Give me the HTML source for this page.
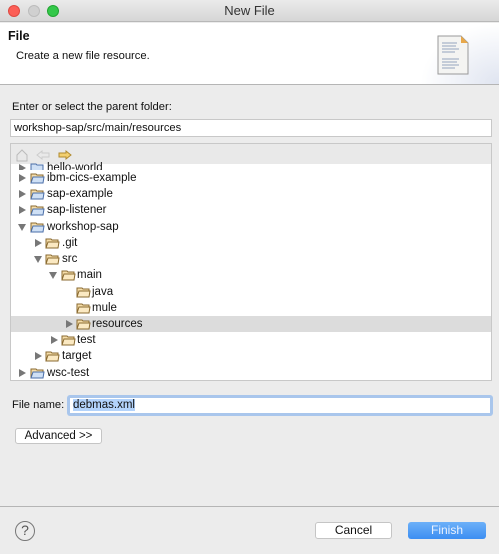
<!DOCTYPE html>
<html><head><style>
*{margin:0;padding:0;box-sizing:border-box}
body{width:499px;height:554px;background:#ececec;font-family:"Liberation Sans",sans-serif;font-size:11.5px;color:#111;position:relative;overflow:hidden}
.a{position:absolute}
.row{position:absolute;left:0;height:16px;line-height:16px;white-space:nowrap}
.tri{position:absolute;top:4px;width:0;height:0}
.tr{border-left:7px solid #777;border-top:4px solid transparent;border-bottom:4px solid transparent}
.td{border-top:7px solid #777;border-left:4px solid transparent;border-right:4px solid transparent;top:5px}
.fold{position:absolute;top:2px;width:15px;height:12px}
.lbl{position:absolute;top:0}
</style></head><body>
<div class="a" style="left:0;top:0;width:499px;height:22px;background:linear-gradient(#ebebeb,#d6d6d6);border-bottom:1px solid #b8b8b8;text-align:center;line-height:22px;font-size:13px;color:#333">New File</div>
<div class="a" style="left:8px;top:5px;width:12px;height:12px;border-radius:50%;background:#fc5f57;border:1px solid #de4a42"></div>
<div class="a" style="left:28px;top:5px;width:12px;height:12px;border-radius:50%;background:#d0d0d0;border:1px solid #bcbcbc"></div>
<div class="a" style="left:47px;top:5px;width:12px;height:12px;border-radius:50%;background:#34c84a;border:1px solid #22a532"></div>
<div class="a" style="left:0;top:23px;width:499px;height:62px;background:#fff;border-bottom:1px solid #b5b5b5"></div>
<div class="a" style="left:420px;top:23px;width:79px;height:61px;background:radial-gradient(ellipse at 100% 100%,#dfe4f0 0%,#fff 70%)"></div>
<div class="a" style="left:8px;top:29px;font-weight:bold;font-size:12.5px">File</div>
<div class="a" style="left:16px;top:50px;font-size:11.2px">Create a new file resource.</div>
<svg class="a" style="left:437px;top:35px" width="32" height="40"><path d="M1 1H24L31 8V39H1Z" fill="#f4f4f2" stroke="#999"/><path d="M24 1V8H31Z" fill="#e8a84a"/><g stroke="#a8b4c8" stroke-width="1.2"><path d="M5 8H20M5 11H19M5 14H22M5 17H18M5 24H22M5 27H20M5 30H22M5 33H18"/></g></svg>
<div class="a" style="left:12px;top:101px;font-size:11.2px">Enter or select the parent folder:</div>
<div class="a" style="left:10px;top:119px;width:482px;height:18px;background:#fff;border:1px solid #c8c8c8;padding-left:3px;line-height:16px;font-size:11.2px">workshop-sap/src/main/resources</div>
<div class="a" style="left:10px;top:143px;width:482px;height:238px;background:#fff;border:1px solid #c8c8c8;overflow:hidden">
<div class="a" style="left:0;top:0;width:480px;height:20px;background:#e9e9e9"></div>
<svg class="a" style="left:4px;top:3px" width="60" height="16"><path d="M2 8L7 3L12 8V14H2Z" fill="#e8e8e8" stroke="#bbb"/><path d="M22 8L27 4V6H34V10H27V12Z" fill="none" stroke="#ccc"/><path d="M56 8L51 4V6H44V10H51V12Z" fill="#f3d070" stroke="#b08a30"/></svg>
<div style="position:absolute;left:0;top:20px;width:480px;height:216px">
<div class="row" style="top:-4px;width:480px"><div class="tri tr" style="left:8px"></div><svg class="fold" style="left:19px" viewBox="0 0 15 12"><path d="M1 2H6L7 3H13V11H1Z" fill="#cfe0f5" stroke="#4a6ea8"/></svg><span class="lbl" style="left:36px">hello-world</span></div>
<div class="row" style="top:6px;width:480px;background:#fff"><div class="tri tr" style="left:8px"></div><svg class="fold" style="left:19px" viewBox="0 0 15 12"><path d="M1 2H6L7 3H13V11H1Z" fill="#f6deaa" stroke="#8a6a30"/><path d="M1 11L3 5H14L13 11Z" fill="#cfe0f5" stroke="#4a6ea8"/></svg><span class="lbl" style="left:36px">ibm-cics-example</span></div>
<div class="row" style="top:22px"><div class="tri tr" style="left:8px"></div><svg class="fold" style="left:19px" viewBox="0 0 15 12"><path d="M1 2H6L7 3H13V11H1Z" fill="#f6deaa" stroke="#8a6a30"/><path d="M1 11L3 5H14L13 11Z" fill="#cfe0f5" stroke="#4a6ea8"/></svg><span class="lbl" style="left:36px">sap-example</span></div>
<div class="row" style="top:38px"><div class="tri tr" style="left:8px"></div><svg class="fold" style="left:19px" viewBox="0 0 15 12"><path d="M1 2H6L7 3H13V11H1Z" fill="#f6deaa" stroke="#8a6a30"/><path d="M1 11L3 5H14L13 11Z" fill="#cfe0f5" stroke="#4a6ea8"/></svg><span class="lbl" style="left:36px">sap-listener</span></div>
<div class="row" style="top:55px"><div class="tri td" style="left:7px"></div><svg class="fold" style="left:19px" viewBox="0 0 15 12"><path d="M1 2H6L7 3H13V11H1Z" fill="#f6deaa" stroke="#8a6a30"/><path d="M1 11L3 5H14L13 11Z" fill="#cfe0f5" stroke="#4a6ea8"/></svg><span class="lbl" style="left:36px">workshop-sap</span></div>
<div class="row" style="top:71px"><div class="tri tr" style="left:24px"></div><svg class="fold" style="left:34px" viewBox="0 0 15 12"><path d="M1 2H6L7 3H13V11H1Z" fill="#f6deaa" stroke="#8a6a30"/><path d="M1 11L3 5H14L13 11Z" fill="#fbe9c2" stroke="#8a6a30"/></svg><span class="lbl" style="left:51px">.git</span></div>
<div class="row" style="top:87px"><div class="tri td" style="left:23px"></div><svg class="fold" style="left:34px" viewBox="0 0 15 12"><path d="M1 2H6L7 3H13V11H1Z" fill="#f6deaa" stroke="#8a6a30"/><path d="M1 11L3 5H14L13 11Z" fill="#fbe9c2" stroke="#8a6a30"/></svg><span class="lbl" style="left:51px">src</span></div>
<div class="row" style="top:103px"><div class="tri td" style="left:38px"></div><svg class="fold" style="left:50px" viewBox="0 0 15 12"><path d="M1 2H6L7 3H13V11H1Z" fill="#f6deaa" stroke="#8a6a30"/><path d="M1 11L3 5H14L13 11Z" fill="#fbe9c2" stroke="#8a6a30"/></svg><span class="lbl" style="left:66px">main</span></div>
<div class="row" style="top:120px"><svg class="fold" style="left:65px" viewBox="0 0 15 12"><path d="M1 2H6L7 3H13V11H1Z" fill="#f6deaa" stroke="#8a6a30"/><path d="M1 11L3 5H14L13 11Z" fill="#fbe9c2" stroke="#8a6a30"/></svg><span class="lbl" style="left:81px">java</span></div>
<div class="row" style="top:136px"><svg class="fold" style="left:65px" viewBox="0 0 15 12"><path d="M1 2H6L7 3H13V11H1Z" fill="#f6deaa" stroke="#8a6a30"/><path d="M1 11L3 5H14L13 11Z" fill="#fbe9c2" stroke="#8a6a30"/></svg><span class="lbl" style="left:81px">mule</span></div>
<div class="row" style="top:152px;width:480px;background:#dcdcdc"><div class="tri tr" style="left:55px"></div><svg class="fold" style="left:65px" viewBox="0 0 15 12"><path d="M1 2H6L7 3H13V11H1Z" fill="#f6deaa" stroke="#8a6a30"/><path d="M1 11L3 5H14L13 11Z" fill="#fbe9c2" stroke="#8a6a30"/></svg><span class="lbl" style="left:81px">resources</span></div>
<div class="row" style="top:168px"><div class="tri tr" style="left:40px"></div><svg class="fold" style="left:50px" viewBox="0 0 15 12"><path d="M1 2H6L7 3H13V11H1Z" fill="#f6deaa" stroke="#8a6a30"/><path d="M1 11L3 5H14L13 11Z" fill="#fbe9c2" stroke="#8a6a30"/></svg><span class="lbl" style="left:66px">test</span></div>
<div class="row" style="top:184px"><div class="tri tr" style="left:24px"></div><svg class="fold" style="left:34px" viewBox="0 0 15 12"><path d="M1 2H6L7 3H13V11H1Z" fill="#f6deaa" stroke="#8a6a30"/><path d="M1 11L3 5H14L13 11Z" fill="#fbe9c2" stroke="#8a6a30"/></svg><span class="lbl" style="left:51px">target</span></div>
<div class="row" style="top:201px"><div class="tri tr" style="left:8px"></div><svg class="fold" style="left:19px" viewBox="0 0 15 12"><path d="M1 2H6L7 3H13V11H1Z" fill="#f6deaa" stroke="#8a6a30"/><path d="M1 11L3 5H14L13 11Z" fill="#cfe0f5" stroke="#4a6ea8"/></svg><span class="lbl" style="left:36px">wsc-test</span></div>
</div></div>
<div class="a" style="left:12px;top:399px;font-size:11.2px">File name:</div>
<div class="a" style="left:67px;top:395px;width:426px;height:21px;border-radius:3px;background:#a9c6ec"></div>
<div class="a" style="left:70px;top:398px;width:420px;height:15px;background:#fff;line-height:15px;padding-left:3px;font-size:11.5px"><span style="background:#b3d3fb">debmas.xml</span></div>
<div class="a" style="left:15px;top:428px;width:87px;height:16px;background:#fff;border:1px solid #c5c5c5;border-radius:3px;text-align:center;line-height:14px;font-size:11.5px">Advanced &gt;&gt;</div>
<div class="a" style="left:0;top:506px;width:499px;height:1px;background:#b5b5b5"></div>
<div class="a" style="left:15px;top:521px;width:20px;height:20px;border-radius:50%;border:1.5px solid #777;text-align:center;line-height:17px;font-size:14px;color:#555">?</div>
<div class="a" style="left:315px;top:522px;width:77px;height:17px;background:#fff;border:1px solid #c5c5c5;border-radius:3px;text-align:center;line-height:15px;font-size:12px">Cancel</div>
<div class="a" style="left:408px;top:522px;width:78px;height:17px;background:linear-gradient(#6cb0f8,#3c8ef2);border-radius:3px;text-align:center;line-height:17px;font-size:12px;color:#eaf2ff">Finish</div>
</body></html>
